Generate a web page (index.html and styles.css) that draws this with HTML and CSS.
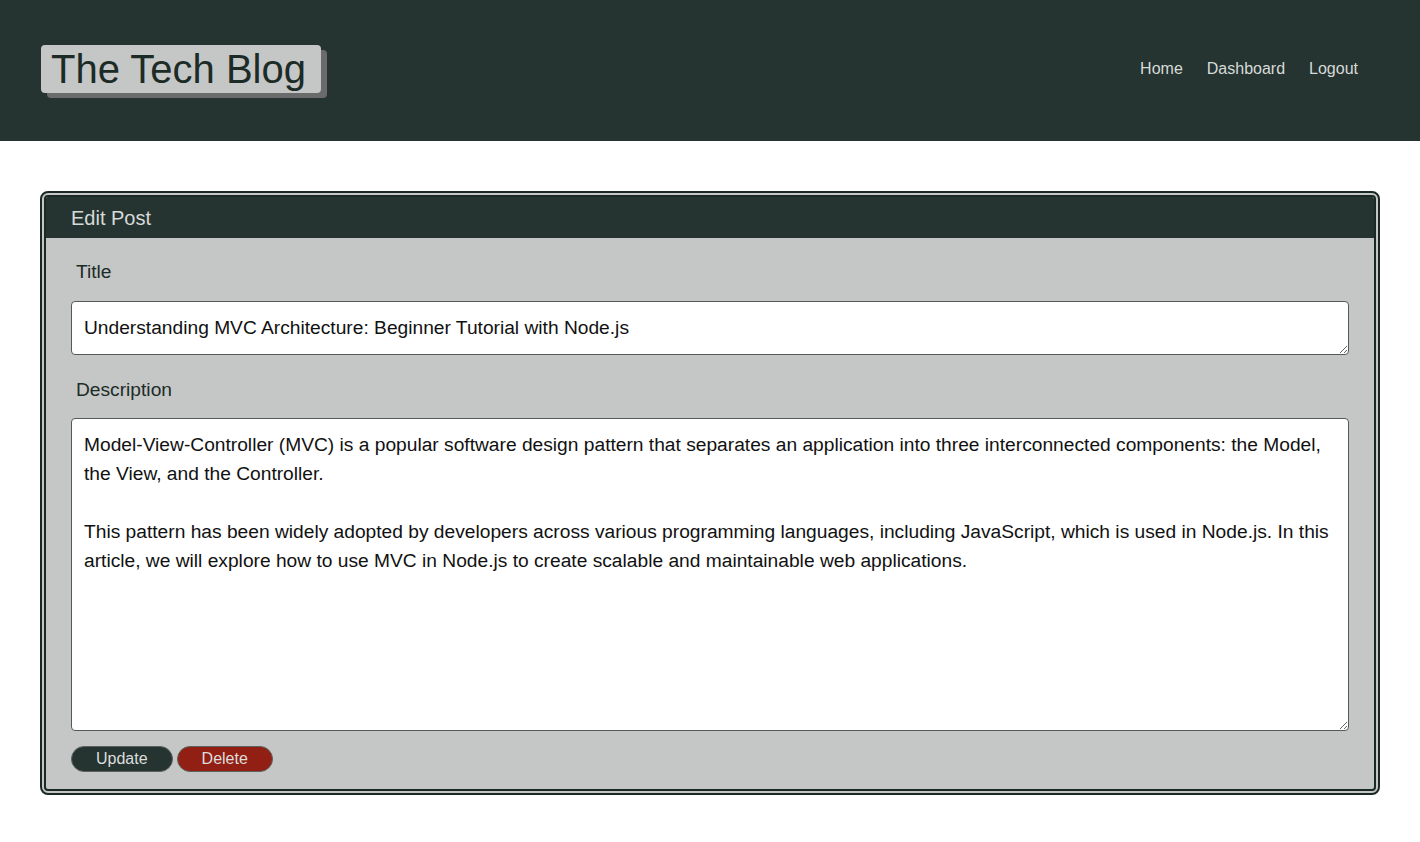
FILE: index.html
```html
<!DOCTYPE html>
<html lang="en">
<head>
<meta charset="utf-8">
<title>The Tech Blog</title>
<link rel="stylesheet" href="styles.css">
</head>
<body>
<header class="site-header">
  <h1 class="brand">The Tech Blog</h1>
  <nav class="nav">
    <a href="#">Home</a>
    <a href="#">Dashboard</a>
    <a href="#">Logout</a>
  </nav>
</header>
<main class="main">
  <section class="card">
    <div class="card-header">Edit Post</div>
    <form class="card-body">
      <label class="label" for="title">Title</label>
      <textarea class="field field-title" id="title">Understanding MVC Architecture: Beginner Tutorial with Node.js</textarea>
      <label class="label label-desc" for="desc">Description</label>
      <textarea class="field field-desc" id="desc">Model-View-Controller (MVC) is a popular software design pattern that separates an application into three interconnected components: the Model, the View, and the Controller.

This pattern has been widely adopted by developers across various programming languages, including JavaScript, which is used in Node.js. In this article, we will explore how to use MVC in Node.js to create scalable and maintainable web applications.</textarea>
      <div class="actions">
        <button type="button" class="btn btn-update">Update</button>
        <button type="button" class="btn btn-delete">Delete</button>
      </div>
    </form>
  </section>
</main>
</body>
</html>
```
FILE: styles.css
```css
* { box-sizing: border-box; }
body {
  margin: 0;
  background: #ffffff;
  font-family: "Liberation Sans", Arial, Helvetica, sans-serif;
  color: #1d2b27;
}
.site-header {
  height: 141px;
  background: #253331;
  display: flex;
  align-items: flex-start;
  justify-content: space-between;
  padding: 45px 62px 0 41px;
}
.brand {
  margin: 0;
  height: 48px;
  line-height: 48px;
  font-size: 40px;
  font-weight: normal;
  background: #c4c7c6;
  color: #1d2b27;
  padding: 0 15px 0 10px;
  border-radius: 4px;
  box-shadow: 6px 5px 0 #6b6b6b;
}
.nav {
  display: flex;
  gap: 24px;
  margin-top: 15px;
}
.nav a {
  color: #d7dbd8;
  text-decoration: none;
  font-size: 16px;
  line-height: 18px;
}
.main {
  padding: 50px 40px 40px;
}
.card {
  border: 6px double #1b2925;
  border-radius: 8px;
  background: #c4c7c6;
  overflow: hidden;
}
.card-header {
  background: #253331;
  color: #d7dbd8;
  height: 41px;
  line-height: 42px;
  font-size: 20px;
  padding-left: 25px;
}
.card-body {
  padding: 0 25px 17px;
}
.label {
  display: block;
  font-size: 19.2px;
  line-height: 22px;
  margin: 23px 0 18px 5px;
  color: #1d2b27;
}
.label-desc {
  margin-top: 24px;
  margin-bottom: 17px;
}
.field {
  display: block;
  width: 100%;
  background: #ffffff;
  border: 1px solid #555a58;
  border-radius: 4px;
  font-family: "Liberation Sans", Arial, Helvetica, sans-serif;
  font-size: 19.2px;
  color: #111;
  padding: 12px 12px;
  line-height: 29px;
  resize: vertical;
  outline: none;
}
.field-title {
  height: 54px;
  padding-top: 11px;
  overflow: hidden;
}
.field-desc {
  height: 313px;
  padding-top: 11px;
}
.actions {
  display: flex;
  gap: 4px;
  margin-top: 15px;
}
.btn {
  height: 26px;
  padding: 0 24px;
  border-radius: 13px;
  border: 1px solid #5d625f;
  font-family: "Liberation Sans", Arial, Helvetica, sans-serif;
  font-size: 16px;
  color: #dcdedd;
  cursor: pointer;
}
.btn-update { background: #253331; }
.btn-delete { background: #921f13; }
```
